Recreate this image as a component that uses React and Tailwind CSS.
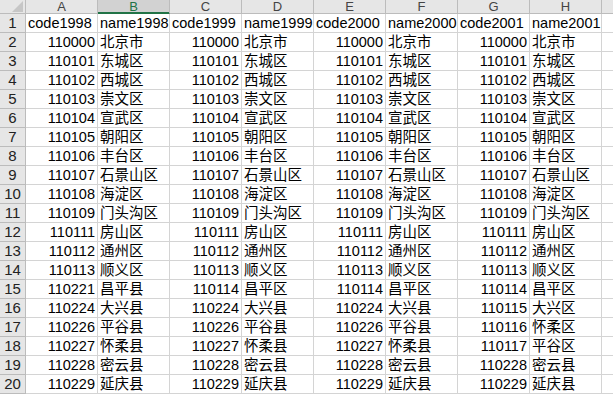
const COLS = ['A', 'B', 'C', 'D', 'E', 'F', 'G', 'H']

const BASE = [
  ['110000', '北京市'], ['110101', '东城区'], ['110102', '西城区'], ['110103', '崇文区'],
  ['110104', '宣武区'], ['110105', '朝阳区'], ['110106', '丰台区'], ['110107', '石景山区'],
  ['110108', '海淀区'], ['110109', '门头沟区'], ['110111', '房山区'], ['110112', '通州区'],
  ['110113', '顺义区'],
]

const TAIL = {
  1998: [['110221', '昌平县'], ['110224', '大兴县'], ['110226', '平谷县'], ['110227', '怀柔县'], ['110228', '密云县'], ['110229', '延庆县']],
  1999: [['110114', '昌平区'], ['110224', '大兴县'], ['110226', '平谷县'], ['110227', '怀柔县'], ['110228', '密云县'], ['110229', '延庆县']],
  2000: [['110114', '昌平区'], ['110224', '大兴县'], ['110226', '平谷县'], ['110227', '怀柔县'], ['110228', '密云县'], ['110229', '延庆县']],
  2001: [['110114', '昌平区'], ['110115', '大兴区'], ['110116', '怀柔区'], ['110117', '平谷区'], ['110228', '密云县'], ['110229', '延庆县']],
}

const YEARS = [1998, 1999, 2000, 2001]

const rows = [YEARS.flatMap(y => [`code${y}`, `name${y}`])]
for (let i = 0; i < 19; i++) {
  rows.push(YEARS.flatMap(y => (i < BASE.length ? BASE[i] : TAIL[y][i - BASE.length])))
}

const cell = 'h-[19px] border-r border-b border-[#d4d4d4] overflow-hidden whitespace-nowrap leading-[18px] text-[14.5px] text-black'

export default function App() {
  return (
    <div
      className="w-[613px] h-[395px] overflow-hidden bg-white"
      style={{ fontFamily: '"Liberation Sans", "Noto Sans CJK SC", sans-serif' }}
    >
      <div className="grid grid-cols-[26px_repeat(8,72px)_1fr]">
        {/* corner */}
        <div className="relative h-[14px] bg-[#e6e6e6] border-r border-b border-[#bcbcbc]">
          <svg className="absolute right-[2px] bottom-[1px]" width="11" height="11" viewBox="0 0 11 11">
            <polygon points="11,0 11,11 0,11" fill="#c6c6c6" />
          </svg>
        </div>
        {COLS.map(c => (
          <div
            key={c}
            className={
              c === 'B'
                ? 'h-[14px] bg-[#d2d2d2] border-r border-[#bcbcbc] border-b border-b-[#217346] shadow-[inset_0_-1px_0_#217346] text-[#217346] text-center text-[13px] leading-[13px]'
                : 'h-[14px] bg-[#e6e6e6] border-r border-b border-[#bcbcbc] text-[#444] text-center text-[13px] leading-[13px]'
            }
          >
            {c}
          </div>
        ))}
        <div className="h-[14px] bg-[#e6e6e6] border-b border-[#bcbcbc]" />

        {rows.map((r, ri) => (
          <div key={ri} className="contents">
            <div className="h-[19px] bg-[#e6e6e6] border-r border-b border-[#bcbcbc] text-center text-[15px] leading-[18px] text-[#222]">
              {ri + 1}
            </div>
            {r.map((v, ci) => {
              const num = ri > 0 && ci % 2 === 0
              return (
                <div key={ci} className={`${cell} ${num ? 'text-right pr-[2px]' : 'pl-[2px]'}`}>
                  {v}
                </div>
              )
            })}
            <div className="h-[19px] border-b border-[#d4d4d4]" />
          </div>
        ))}
      </div>
    </div>
  )
}
